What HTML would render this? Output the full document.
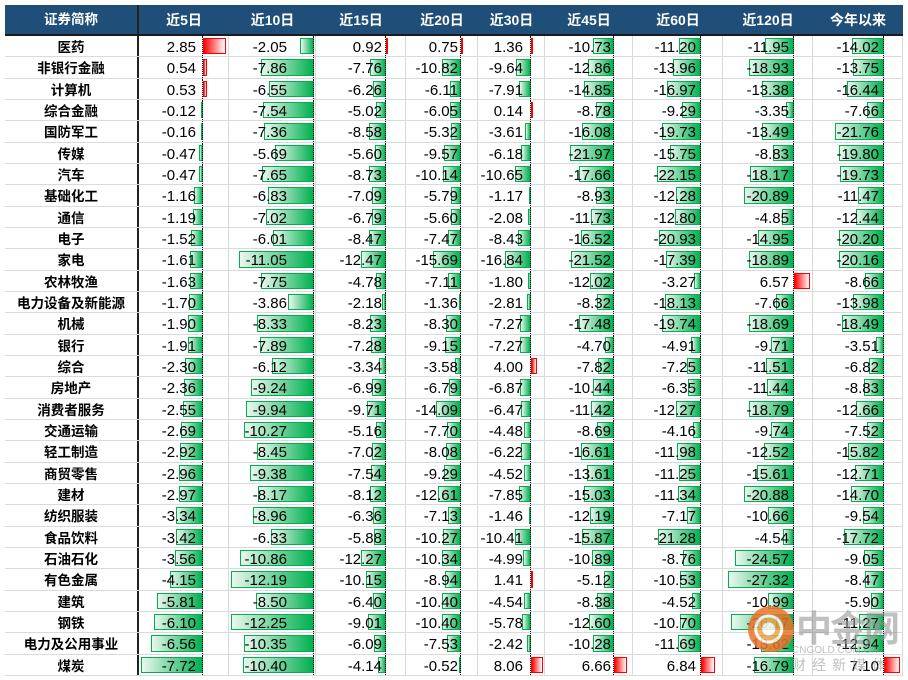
<!DOCTYPE html>
<html><head><meta charset="utf-8"><style>
body{margin:0;width:908px;height:680px;background:#fff;overflow:hidden;font-family:"Liberation Sans","Noto Sans CJK SC",sans-serif;position:relative}
#t{position:absolute;left:5px;top:5px;width:898px}
.h{display:flex;height:31px;background:#1f4e79;color:#fff;font-size:14px;font-weight:bold;border-bottom:2px solid #1a1a1a;box-sizing:border-box}
.h div{display:flex;align-items:center;justify-content:center}
.r{display:flex;height:21.33px;border-bottom:1px solid #dadada;box-sizing:border-box;font-size:15px;color:#000}
.r>div,.h>div{position:relative;flex:none}
.r>div:first-child,.h>div:first-child{border-right:2px solid #222;box-sizing:border-box;text-align:center;font-weight:bold;font-size:13.5px;line-height:24px}
.r>div+div{border-right:1px solid #dadada;box-sizing:border-box}
.w0{width:134px}.c1{width:90px;--a:25px;--t:32px;--s:8px}.c2{width:87px;--a:1px;--t:28px;--s:6.8px}.c3{width:90px;--a:19px;--t:23px;--s:2px}
.c4{width:72px;--a:16px;--t:19px;--s:1.8px}.c5{width:67px;--a:13px;--t:21px;--s:1.55px}.c6{width:88px;--a:18px;--t:21px;--s:2px}
.c7{width:90px;--a:21px;--t:26px;--s:2px}.c8{width:90px;--a:18px;--t:23px;--s:2.4px}.c9{width:90px;--a:18px;--t:23px;--s:2.25px}
.r>div+div::after{content:"";position:absolute;top:0;bottom:0;right:var(--a);border-left:1px dotted #000}
.r i{position:absolute;top:2px;bottom:2px;right:var(--a);width:calc(var(--v)*var(--s));box-sizing:border-box;border:1px solid #00b050;background:linear-gradient(90deg,#eaf7ee,#00b050)}
.r i.p{right:auto;left:calc(100% - var(--a));border-color:#f00;background:linear-gradient(90deg,#f00,#fff)}
.r span{position:absolute;right:var(--t);top:0;line-height:23px;z-index:2}
.wm{position:absolute;left:748px;top:606px;width:46px;height:46px;border-radius:50%;background:radial-gradient(circle at 45% 50%,#fff 0 6px,#f2a24d 7px 11px,#fff 12px 14px,#e9742a 15px);opacity:.85;z-index:5}
.wt{position:absolute;left:796px;top:600px;font-size:36px;color:rgba(150,150,150,.6);font-weight:bold;z-index:5;letter-spacing:-2px}
.ws{position:absolute;left:792px;top:645px;font-size:10px;color:rgba(150,150,150,.6);z-index:5}
.wc{position:absolute;left:792px;top:655px;font-size:14px;color:rgba(150,150,150,.6);letter-spacing:6px;z-index:5}
</style></head><body>
<div id="t">
<div class="h"><div class="w0">证券简称</div><div class="c1">近5日</div><div class="c2">近10日</div><div class="c3">近15日</div><div class="c4">近20日</div><div class="c5">近30日</div><div class="c6">近45日</div><div class="c7">近60日</div><div class="c8">近120日</div><div class="c9">今年以来</div></div>

<div class="r"><div class="w0">医药</div><div class="c1"><i class="p" style="--v:2.85"></i><span>2.85</span></div><div class="c2"><i style="--v:2.05"></i><span>-2.05</span></div><div class="c3"><i class="p" style="--v:0.92"></i><span>0.92</span></div><div class="c4"><i class="p" style="--v:0.75"></i><span>0.75</span></div><div class="c5"><i class="p" style="--v:1.36"></i><span>1.36</span></div><div class="c6"><i style="--v:10.73"></i><span>-10.73</span></div><div class="c7"><i style="--v:11.20"></i><span>-11.20</span></div><div class="c8"><i style="--v:11.95"></i><span>-11.95</span></div><div class="c9"><i style="--v:14.02"></i><span>-14.02</span></div></div>
<div class="r"><div class="w0">非银行金融</div><div class="c1"><i class="p" style="--v:0.54"></i><span>0.54</span></div><div class="c2"><i style="--v:7.86"></i><span>-7.86</span></div><div class="c3"><i style="--v:7.76"></i><span>-7.76</span></div><div class="c4"><i style="--v:10.82"></i><span>-10.82</span></div><div class="c5"><i style="--v:9.64"></i><span>-9.64</span></div><div class="c6"><i style="--v:12.86"></i><span>-12.86</span></div><div class="c7"><i style="--v:13.96"></i><span>-13.96</span></div><div class="c8"><i style="--v:18.93"></i><span>-18.93</span></div><div class="c9"><i style="--v:13.75"></i><span>-13.75</span></div></div>
<div class="r"><div class="w0">计算机</div><div class="c1"><i class="p" style="--v:0.53"></i><span>0.53</span></div><div class="c2"><i style="--v:6.55"></i><span>-6.55</span></div><div class="c3"><i style="--v:6.26"></i><span>-6.26</span></div><div class="c4"><i style="--v:6.11"></i><span>-6.11</span></div><div class="c5"><i style="--v:7.91"></i><span>-7.91</span></div><div class="c6"><i style="--v:14.85"></i><span>-14.85</span></div><div class="c7"><i style="--v:16.97"></i><span>-16.97</span></div><div class="c8"><i style="--v:13.38"></i><span>-13.38</span></div><div class="c9"><i style="--v:16.44"></i><span>-16.44</span></div></div>
<div class="r"><div class="w0">综合金融</div><div class="c1"><i style="--v:0.12"></i><span>-0.12</span></div><div class="c2"><i style="--v:7.54"></i><span>-7.54</span></div><div class="c3"><i style="--v:5.02"></i><span>-5.02</span></div><div class="c4"><i style="--v:6.05"></i><span>-6.05</span></div><div class="c5"><i class="p" style="--v:0.14"></i><span>0.14</span></div><div class="c6"><i style="--v:8.78"></i><span>-8.78</span></div><div class="c7"><i style="--v:9.29"></i><span>-9.29</span></div><div class="c8"><i style="--v:3.35"></i><span>-3.35</span></div><div class="c9"><i style="--v:7.66"></i><span>-7.66</span></div></div>
<div class="r"><div class="w0">国防军工</div><div class="c1"><i style="--v:0.16"></i><span>-0.16</span></div><div class="c2"><i style="--v:7.36"></i><span>-7.36</span></div><div class="c3"><i style="--v:8.58"></i><span>-8.58</span></div><div class="c4"><i style="--v:5.32"></i><span>-5.32</span></div><div class="c5"><i style="--v:3.61"></i><span>-3.61</span></div><div class="c6"><i style="--v:16.08"></i><span>-16.08</span></div><div class="c7"><i style="--v:19.73"></i><span>-19.73</span></div><div class="c8"><i style="--v:13.49"></i><span>-13.49</span></div><div class="c9"><i style="--v:21.76"></i><span>-21.76</span></div></div>
<div class="r"><div class="w0">传媒</div><div class="c1"><i style="--v:0.47"></i><span>-0.47</span></div><div class="c2"><i style="--v:5.69"></i><span>-5.69</span></div><div class="c3"><i style="--v:5.60"></i><span>-5.60</span></div><div class="c4"><i style="--v:9.57"></i><span>-9.57</span></div><div class="c5"><i style="--v:6.18"></i><span>-6.18</span></div><div class="c6"><i style="--v:21.97"></i><span>-21.97</span></div><div class="c7"><i style="--v:15.75"></i><span>-15.75</span></div><div class="c8"><i style="--v:8.83"></i><span>-8.83</span></div><div class="c9"><i style="--v:19.80"></i><span>-19.80</span></div></div>
<div class="r"><div class="w0">汽车</div><div class="c1"><i style="--v:0.47"></i><span>-0.47</span></div><div class="c2"><i style="--v:7.65"></i><span>-7.65</span></div><div class="c3"><i style="--v:8.73"></i><span>-8.73</span></div><div class="c4"><i style="--v:10.14"></i><span>-10.14</span></div><div class="c5"><i style="--v:10.65"></i><span>-10.65</span></div><div class="c6"><i style="--v:17.66"></i><span>-17.66</span></div><div class="c7"><i style="--v:22.15"></i><span>-22.15</span></div><div class="c8"><i style="--v:18.17"></i><span>-18.17</span></div><div class="c9"><i style="--v:19.73"></i><span>-19.73</span></div></div>
<div class="r"><div class="w0">基础化工</div><div class="c1"><i style="--v:1.16"></i><span>-1.16</span></div><div class="c2"><i style="--v:6.83"></i><span>-6.83</span></div><div class="c3"><i style="--v:7.09"></i><span>-7.09</span></div><div class="c4"><i style="--v:5.79"></i><span>-5.79</span></div><div class="c5"><i style="--v:1.17"></i><span>-1.17</span></div><div class="c6"><i style="--v:8.93"></i><span>-8.93</span></div><div class="c7"><i style="--v:12.28"></i><span>-12.28</span></div><div class="c8"><i style="--v:20.89"></i><span>-20.89</span></div><div class="c9"><i style="--v:11.47"></i><span>-11.47</span></div></div>
<div class="r"><div class="w0">通信</div><div class="c1"><i style="--v:1.19"></i><span>-1.19</span></div><div class="c2"><i style="--v:7.02"></i><span>-7.02</span></div><div class="c3"><i style="--v:6.79"></i><span>-6.79</span></div><div class="c4"><i style="--v:5.60"></i><span>-5.60</span></div><div class="c5"><i style="--v:2.08"></i><span>-2.08</span></div><div class="c6"><i style="--v:11.73"></i><span>-11.73</span></div><div class="c7"><i style="--v:12.80"></i><span>-12.80</span></div><div class="c8"><i style="--v:4.85"></i><span>-4.85</span></div><div class="c9"><i style="--v:12.44"></i><span>-12.44</span></div></div>
<div class="r"><div class="w0">电子</div><div class="c1"><i style="--v:1.52"></i><span>-1.52</span></div><div class="c2"><i style="--v:6.01"></i><span>-6.01</span></div><div class="c3"><i style="--v:8.47"></i><span>-8.47</span></div><div class="c4"><i style="--v:7.47"></i><span>-7.47</span></div><div class="c5"><i style="--v:8.43"></i><span>-8.43</span></div><div class="c6"><i style="--v:16.52"></i><span>-16.52</span></div><div class="c7"><i style="--v:20.93"></i><span>-20.93</span></div><div class="c8"><i style="--v:14.95"></i><span>-14.95</span></div><div class="c9"><i style="--v:20.20"></i><span>-20.20</span></div></div>
<div class="r"><div class="w0">家电</div><div class="c1"><i style="--v:1.61"></i><span>-1.61</span></div><div class="c2"><i style="--v:11.05"></i><span>-11.05</span></div><div class="c3"><i style="--v:12.47"></i><span>-12.47</span></div><div class="c4"><i style="--v:15.69"></i><span>-15.69</span></div><div class="c5"><i style="--v:16.84"></i><span>-16.84</span></div><div class="c6"><i style="--v:21.52"></i><span>-21.52</span></div><div class="c7"><i style="--v:17.39"></i><span>-17.39</span></div><div class="c8"><i style="--v:18.89"></i><span>-18.89</span></div><div class="c9"><i style="--v:20.16"></i><span>-20.16</span></div></div>
<div class="r"><div class="w0">农林牧渔</div><div class="c1"><i style="--v:1.63"></i><span>-1.63</span></div><div class="c2"><i style="--v:7.75"></i><span>-7.75</span></div><div class="c3"><i style="--v:4.78"></i><span>-4.78</span></div><div class="c4"><i style="--v:7.11"></i><span>-7.11</span></div><div class="c5"><i style="--v:1.80"></i><span>-1.80</span></div><div class="c6"><i style="--v:12.02"></i><span>-12.02</span></div><div class="c7"><i style="--v:3.27"></i><span>-3.27</span></div><div class="c8"><i class="p" style="--v:6.57"></i><span>6.57</span></div><div class="c9"><i style="--v:8.66"></i><span>-8.66</span></div></div>
<div class="r"><div class="w0">电力设备及新能源</div><div class="c1"><i style="--v:1.70"></i><span>-1.70</span></div><div class="c2"><i style="--v:3.86"></i><span>-3.86</span></div><div class="c3"><i style="--v:2.18"></i><span>-2.18</span></div><div class="c4"><i style="--v:1.36"></i><span>-1.36</span></div><div class="c5"><i style="--v:2.81"></i><span>-2.81</span></div><div class="c6"><i style="--v:8.32"></i><span>-8.32</span></div><div class="c7"><i style="--v:18.13"></i><span>-18.13</span></div><div class="c8"><i style="--v:7.66"></i><span>-7.66</span></div><div class="c9"><i style="--v:13.98"></i><span>-13.98</span></div></div>
<div class="r"><div class="w0">机械</div><div class="c1"><i style="--v:1.90"></i><span>-1.90</span></div><div class="c2"><i style="--v:8.33"></i><span>-8.33</span></div><div class="c3"><i style="--v:8.23"></i><span>-8.23</span></div><div class="c4"><i style="--v:8.30"></i><span>-8.30</span></div><div class="c5"><i style="--v:7.27"></i><span>-7.27</span></div><div class="c6"><i style="--v:17.48"></i><span>-17.48</span></div><div class="c7"><i style="--v:19.74"></i><span>-19.74</span></div><div class="c8"><i style="--v:18.69"></i><span>-18.69</span></div><div class="c9"><i style="--v:18.49"></i><span>-18.49</span></div></div>
<div class="r"><div class="w0">银行</div><div class="c1"><i style="--v:1.91"></i><span>-1.91</span></div><div class="c2"><i style="--v:7.89"></i><span>-7.89</span></div><div class="c3"><i style="--v:7.28"></i><span>-7.28</span></div><div class="c4"><i style="--v:9.15"></i><span>-9.15</span></div><div class="c5"><i style="--v:7.27"></i><span>-7.27</span></div><div class="c6"><i style="--v:4.70"></i><span>-4.70</span></div><div class="c7"><i style="--v:4.91"></i><span>-4.91</span></div><div class="c8"><i style="--v:9.71"></i><span>-9.71</span></div><div class="c9"><i style="--v:3.51"></i><span>-3.51</span></div></div>
<div class="r"><div class="w0">综合</div><div class="c1"><i style="--v:2.30"></i><span>-2.30</span></div><div class="c2"><i style="--v:6.12"></i><span>-6.12</span></div><div class="c3"><i style="--v:3.34"></i><span>-3.34</span></div><div class="c4"><i style="--v:3.58"></i><span>-3.58</span></div><div class="c5"><i class="p" style="--v:4.00"></i><span>4.00</span></div><div class="c6"><i style="--v:7.82"></i><span>-7.82</span></div><div class="c7"><i style="--v:7.25"></i><span>-7.25</span></div><div class="c8"><i style="--v:11.51"></i><span>-11.51</span></div><div class="c9"><i style="--v:6.82"></i><span>-6.82</span></div></div>
<div class="r"><div class="w0">房地产</div><div class="c1"><i style="--v:2.36"></i><span>-2.36</span></div><div class="c2"><i style="--v:9.24"></i><span>-9.24</span></div><div class="c3"><i style="--v:6.99"></i><span>-6.99</span></div><div class="c4"><i style="--v:6.79"></i><span>-6.79</span></div><div class="c5"><i style="--v:6.87"></i><span>-6.87</span></div><div class="c6"><i style="--v:10.44"></i><span>-10.44</span></div><div class="c7"><i style="--v:6.35"></i><span>-6.35</span></div><div class="c8"><i style="--v:11.44"></i><span>-11.44</span></div><div class="c9"><i style="--v:8.83"></i><span>-8.83</span></div></div>
<div class="r"><div class="w0">消费者服务</div><div class="c1"><i style="--v:2.55"></i><span>-2.55</span></div><div class="c2"><i style="--v:9.94"></i><span>-9.94</span></div><div class="c3"><i style="--v:9.71"></i><span>-9.71</span></div><div class="c4"><i style="--v:14.09"></i><span>-14.09</span></div><div class="c5"><i style="--v:6.47"></i><span>-6.47</span></div><div class="c6"><i style="--v:11.42"></i><span>-11.42</span></div><div class="c7"><i style="--v:12.27"></i><span>-12.27</span></div><div class="c8"><i style="--v:18.79"></i><span>-18.79</span></div><div class="c9"><i style="--v:12.66"></i><span>-12.66</span></div></div>
<div class="r"><div class="w0">交通运输</div><div class="c1"><i style="--v:2.69"></i><span>-2.69</span></div><div class="c2"><i style="--v:10.27"></i><span>-10.27</span></div><div class="c3"><i style="--v:5.16"></i><span>-5.16</span></div><div class="c4"><i style="--v:7.70"></i><span>-7.70</span></div><div class="c5"><i style="--v:4.48"></i><span>-4.48</span></div><div class="c6"><i style="--v:8.69"></i><span>-8.69</span></div><div class="c7"><i style="--v:4.16"></i><span>-4.16</span></div><div class="c8"><i style="--v:9.74"></i><span>-9.74</span></div><div class="c9"><i style="--v:7.52"></i><span>-7.52</span></div></div>
<div class="r"><div class="w0">轻工制造</div><div class="c1"><i style="--v:2.92"></i><span>-2.92</span></div><div class="c2"><i style="--v:8.45"></i><span>-8.45</span></div><div class="c3"><i style="--v:7.02"></i><span>-7.02</span></div><div class="c4"><i style="--v:8.08"></i><span>-8.08</span></div><div class="c5"><i style="--v:6.22"></i><span>-6.22</span></div><div class="c6"><i style="--v:16.61"></i><span>-16.61</span></div><div class="c7"><i style="--v:11.98"></i><span>-11.98</span></div><div class="c8"><i style="--v:12.52"></i><span>-12.52</span></div><div class="c9"><i style="--v:15.82"></i><span>-15.82</span></div></div>
<div class="r"><div class="w0">商贸零售</div><div class="c1"><i style="--v:2.96"></i><span>-2.96</span></div><div class="c2"><i style="--v:9.38"></i><span>-9.38</span></div><div class="c3"><i style="--v:7.54"></i><span>-7.54</span></div><div class="c4"><i style="--v:9.29"></i><span>-9.29</span></div><div class="c5"><i style="--v:4.52"></i><span>-4.52</span></div><div class="c6"><i style="--v:13.61"></i><span>-13.61</span></div><div class="c7"><i style="--v:11.25"></i><span>-11.25</span></div><div class="c8"><i style="--v:15.61"></i><span>-15.61</span></div><div class="c9"><i style="--v:12.71"></i><span>-12.71</span></div></div>
<div class="r"><div class="w0">建材</div><div class="c1"><i style="--v:2.97"></i><span>-2.97</span></div><div class="c2"><i style="--v:8.17"></i><span>-8.17</span></div><div class="c3"><i style="--v:8.12"></i><span>-8.12</span></div><div class="c4"><i style="--v:12.61"></i><span>-12.61</span></div><div class="c5"><i style="--v:7.85"></i><span>-7.85</span></div><div class="c6"><i style="--v:15.03"></i><span>-15.03</span></div><div class="c7"><i style="--v:11.34"></i><span>-11.34</span></div><div class="c8"><i style="--v:20.88"></i><span>-20.88</span></div><div class="c9"><i style="--v:14.70"></i><span>-14.70</span></div></div>
<div class="r"><div class="w0">纺织服装</div><div class="c1"><i style="--v:3.34"></i><span>-3.34</span></div><div class="c2"><i style="--v:8.96"></i><span>-8.96</span></div><div class="c3"><i style="--v:6.36"></i><span>-6.36</span></div><div class="c4"><i style="--v:7.13"></i><span>-7.13</span></div><div class="c5"><i style="--v:1.46"></i><span>-1.46</span></div><div class="c6"><i style="--v:12.19"></i><span>-12.19</span></div><div class="c7"><i style="--v:7.17"></i><span>-7.17</span></div><div class="c8"><i style="--v:10.66"></i><span>-10.66</span></div><div class="c9"><i style="--v:9.54"></i><span>-9.54</span></div></div>
<div class="r"><div class="w0">食品饮料</div><div class="c1"><i style="--v:3.42"></i><span>-3.42</span></div><div class="c2"><i style="--v:6.33"></i><span>-6.33</span></div><div class="c3"><i style="--v:5.88"></i><span>-5.88</span></div><div class="c4"><i style="--v:10.27"></i><span>-10.27</span></div><div class="c5"><i style="--v:10.41"></i><span>-10.41</span></div><div class="c6"><i style="--v:15.87"></i><span>-15.87</span></div><div class="c7"><i style="--v:21.28"></i><span>-21.28</span></div><div class="c8"><i style="--v:4.54"></i><span>-4.54</span></div><div class="c9"><i style="--v:17.72"></i><span>-17.72</span></div></div>
<div class="r"><div class="w0">石油石化</div><div class="c1"><i style="--v:3.56"></i><span>-3.56</span></div><div class="c2"><i style="--v:10.86"></i><span>-10.86</span></div><div class="c3"><i style="--v:12.27"></i><span>-12.27</span></div><div class="c4"><i style="--v:10.34"></i><span>-10.34</span></div><div class="c5"><i style="--v:4.99"></i><span>-4.99</span></div><div class="c6"><i style="--v:10.89"></i><span>-10.89</span></div><div class="c7"><i style="--v:8.76"></i><span>-8.76</span></div><div class="c8"><i style="--v:24.57"></i><span>-24.57</span></div><div class="c9"><i style="--v:9.05"></i><span>-9.05</span></div></div>
<div class="r"><div class="w0">有色金属</div><div class="c1"><i style="--v:4.15"></i><span>-4.15</span></div><div class="c2"><i style="--v:12.19"></i><span>-12.19</span></div><div class="c3"><i style="--v:10.15"></i><span>-10.15</span></div><div class="c4"><i style="--v:8.94"></i><span>-8.94</span></div><div class="c5"><i class="p" style="--v:1.41"></i><span>1.41</span></div><div class="c6"><i style="--v:5.12"></i><span>-5.12</span></div><div class="c7"><i style="--v:10.53"></i><span>-10.53</span></div><div class="c8"><i style="--v:27.32"></i><span>-27.32</span></div><div class="c9"><i style="--v:8.47"></i><span>-8.47</span></div></div>
<div class="r"><div class="w0">建筑</div><div class="c1"><i style="--v:5.81"></i><span>-5.81</span></div><div class="c2"><i style="--v:8.50"></i><span>-8.50</span></div><div class="c3"><i style="--v:6.40"></i><span>-6.40</span></div><div class="c4"><i style="--v:10.40"></i><span>-10.40</span></div><div class="c5"><i style="--v:4.54"></i><span>-4.54</span></div><div class="c6"><i style="--v:8.38"></i><span>-8.38</span></div><div class="c7"><i style="--v:4.52"></i><span>-4.52</span></div><div class="c8"><i style="--v:10.99"></i><span>-10.99</span></div><div class="c9"><i style="--v:5.90"></i><span>-5.90</span></div></div>
<div class="r"><div class="w0">钢铁</div><div class="c1"><i style="--v:6.10"></i><span>-6.10</span></div><div class="c2"><i style="--v:12.25"></i><span>-12.25</span></div><div class="c3"><i style="--v:9.01"></i><span>-9.01</span></div><div class="c4"><i style="--v:10.40"></i><span>-10.40</span></div><div class="c5"><i style="--v:5.78"></i><span>-5.78</span></div><div class="c6"><i style="--v:12.60"></i><span>-12.60</span></div><div class="c7"><i style="--v:10.70"></i><span>-10.70</span></div><div class="c8"><i style="--v:26.17"></i><span>-26.17</span></div><div class="c9"><i style="--v:11.27"></i><span>-11.27</span></div></div>
<div class="r"><div class="w0">电力及公用事业</div><div class="c1"><i style="--v:6.56"></i><span>-6.56</span></div><div class="c2"><i style="--v:10.35"></i><span>-10.35</span></div><div class="c3"><i style="--v:6.09"></i><span>-6.09</span></div><div class="c4"><i style="--v:7.53"></i><span>-7.53</span></div><div class="c5"><i style="--v:2.42"></i><span>-2.42</span></div><div class="c6"><i style="--v:10.28"></i><span>-10.28</span></div><div class="c7"><i style="--v:11.69"></i><span>-11.69</span></div><div class="c8"><i style="--v:13.62"></i><span>-13.62</span></div><div class="c9"><i style="--v:12.94"></i><span>-12.94</span></div></div>
<div class="r"><div class="w0">煤炭</div><div class="c1"><i style="--v:7.72"></i><span>-7.72</span></div><div class="c2"><i style="--v:10.40"></i><span>-10.40</span></div><div class="c3"><i style="--v:4.14"></i><span>-4.14</span></div><div class="c4"><i style="--v:0.52"></i><span>-0.52</span></div><div class="c5"><i class="p" style="--v:8.06"></i><span>8.06</span></div><div class="c6"><i class="p" style="--v:6.66"></i><span>6.66</span></div><div class="c7"><i class="p" style="--v:6.84"></i><span>6.84</span></div><div class="c8"><i style="--v:16.79"></i><span>-16.79</span></div><div class="c9"><i class="p" style="--v:7.10"></i><span>7.10</span></div></div>
</div>
<div class="wm"></div>
<div class="wt">中金网</div>
<div class="ws">CNGOLD.COM.CN</div>
<div class="wc">财经新媒体</div>
</body></html>
